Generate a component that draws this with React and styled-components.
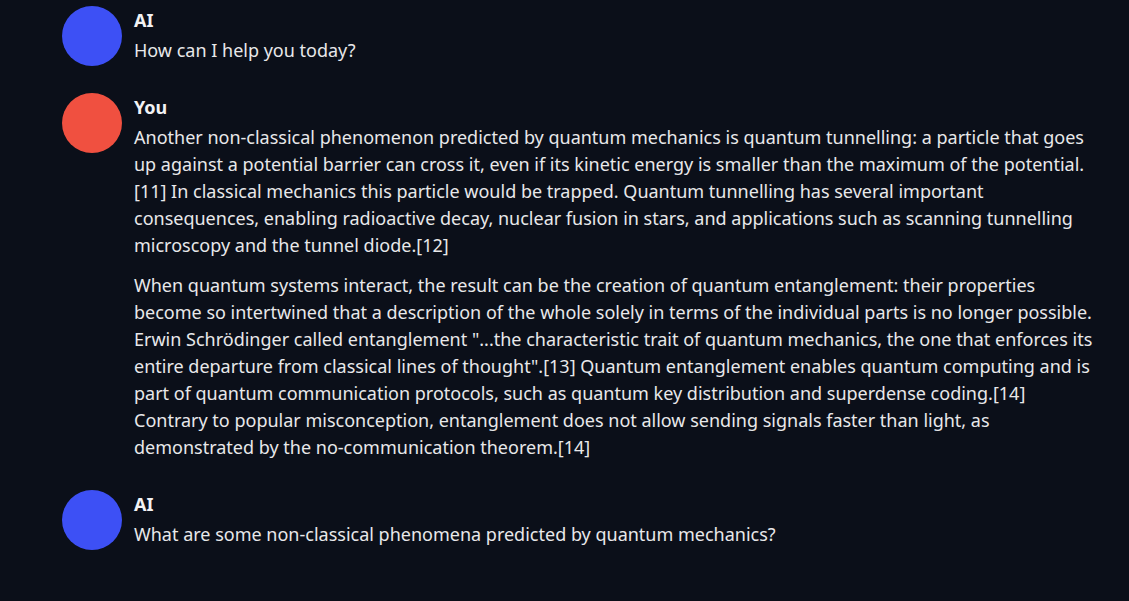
import React from 'react'
import styled, { createGlobalStyle } from 'styled-components'

const Global = createGlobalStyle`
html, body {
  margin: 0;
  padding: 0;
  background: #0b0f19;
}
body {
  font-family: 'Noto Sans', 'Open Sans', sans-serif;
  color: #e8e8ea;
}
`

const Page = styled.div`
min-height: 100vh;
padding: 6px 29px 0 62px;
box-sizing: border-box;
display: flex;
flex-direction: column;
gap: 16px;
`

const Message = styled.div`
display: flex;
align-items: flex-start;
gap: 12px;
`

const Avatar = styled.div`
flex: none;
width: 60px;
height: 60px;
border-radius: 50%;
background: ${props => props.$user ? '#f05040' : '#3d50f5'};
`

const Body = styled.div`
flex: 1;
min-width: 0;
padding-top: 2px;
`

const Name = styled.div`
font-size: 18px;
font-weight: 700;
line-height: 24px;
color: #f2f2f4;
margin-bottom: 5px;
`

const Text = styled.p`
margin: 0 0 13px;
font-size: 18px;
line-height: 27px;
`

const messages = [
  { user: false, name: 'AI', text: ['How can I help you today?'] },
  {
    user: true,
    name: 'You',
    text: [
      'Another non-classical phenomenon predicted by quantum mechanics is quantum tunnelling: a particle that goes up against a potential barrier can cross it, even if its kinetic energy is smaller than the maximum of the potential.[11] In classical mechanics this particle would be trapped. Quantum tunnelling has several important consequences, enabling radioactive decay, nuclear fusion in stars, and applications such as scanning tunnelling microscopy and the tunnel diode.[12]',
      'When quantum systems interact, the result can be the creation of quantum entanglement: their properties become so intertwined that a description of the whole solely in terms of the individual parts is no longer possible. Erwin Schrödinger called entanglement "...the characteristic trait of quantum mechanics, the one that enforces its entire departure from classical lines of thought".[13] Quantum entanglement enables quantum computing and is part of quantum communication protocols, such as quantum key distribution and superdense coding.[14] Contrary to popular misconception, entanglement does not allow sending signals faster than light, as demonstrated by the no-communication theorem.[14]',
    ],
  },
  { user: false, name: 'AI', text: ['What are some non-classical phenomena predicted by quantum mechanics?'] },
]

const App = () => {
  return (
    <>
      <Global />
      <Page>
        {messages.map((m, i) => (
          <Message key={i}>
            <Avatar $user={m.user} />
            <Body>
              <Name>{m.name}</Name>
              {m.text.map((t, j) => <Text key={j}>{t}</Text>)}
            </Body>
          </Message>
        ))}
      </Page>
    </>
  )
}

export default App
